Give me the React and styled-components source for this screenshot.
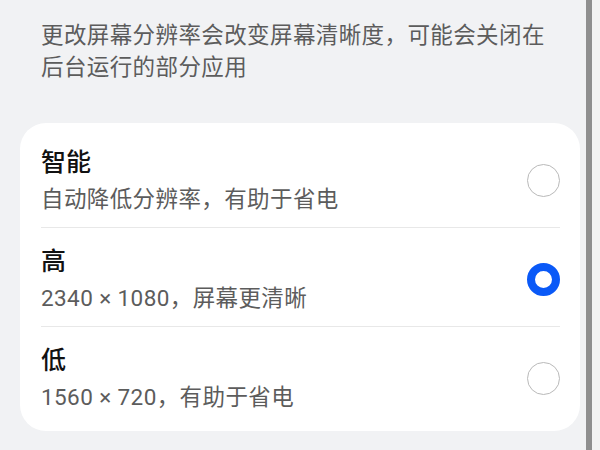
import React from "react";
import styled, { createGlobalStyle } from "styled-components";

const Global = createGlobalStyle`
  html, body { margin: 0; padding: 0; background: #f1f2f4; }
  body { font-family: Roboto, "Noto Sans CJK SC", "Noto Sans", sans-serif; }
  #root { width: 600px; height: 450px; overflow: hidden; }
`;

const Page = styled.div`
  display: flex;
  width: 600px;
  height: 450px;
  background: #f1f2f4;
`;

const Main = styled.div`
  width: 586px;
  display: flex;
  flex-direction: column;
`;

const EdgeBar = styled.div`
  width: 6px;
  height: 100%;
  background: #8f8f8f;
`;

const EdgeRest = styled.div`
  flex: 1;
  background: #f3f3f3;
`;

const Description = styled.p`
  margin: 19px 0 0 0;
  padding: 0 30px 0 41px;
  font-size: 22.5px;
  line-height: 32px;
  color: #5c5c5c;
  letter-spacing: 0.4px;
`;

const Card = styled.div`
  margin: 40px 6px 0 20px;
  background: #ffffff;
  border-radius: 26px;
  padding: 6px 0;
`;

const Row = styled.div`
  display: flex;
  align-items: center;
  margin: 0 20px 0 21px;
  padding: 16px 0 12px;
  height: 70px;
  border-bottom: ${(p) => (p.$last ? "none" : "1.5px solid #e8e8e8")};
`;

const Texts = styled.div`
  flex: 1;
  display: flex;
  flex-direction: column;
`;

const Title = styled.div`
  font-size: 25px;
  line-height: 36px;
  font-weight: 500;
  color: #111111;
`;

const Sub = styled.div`
  margin-top: 2px;
  font-size: 22.5px;
  line-height: 32px;
  color: #5c5c5c;
  letter-spacing: 0.4px;
`;

const Radio = styled.div`
  width: 33px;
  height: 33px;
  box-sizing: border-box;
  border-radius: 50%;
  margin-top: 1px;
  border: ${(p) => (p.$checked ? "8px solid #0a59f7" : "1.8px solid #b9b9b9")};
  background: #fff;
`;

const options = [
  { title: "智能", sub: "自动降低分辨率，有助于省电", checked: false },
  { title: "高", sub: "2340 × 1080，屏幕更清晰", checked: true },
  { title: "低", sub: "1560 × 720，有助于省电", checked: false },
];

export default function App() {
  return (
    <>
      <Global />
      <Page>
        <Main>
          <Description>
            更改屏幕分辨率会改变屏幕清晰度，可能会关闭在后台运行的部分应用
          </Description>
          <Card>
            {options.map((o, i) => (
              <Row key={o.title} $last={i === options.length - 1}>
                <Texts>
                  <Title>{o.title}</Title>
                  <Sub>{o.sub}</Sub>
                </Texts>
                <Radio $checked={o.checked} />
              </Row>
            ))}
          </Card>
        </Main>
        <EdgeBar />
        <EdgeRest />
      </Page>
    </>
  );
}
